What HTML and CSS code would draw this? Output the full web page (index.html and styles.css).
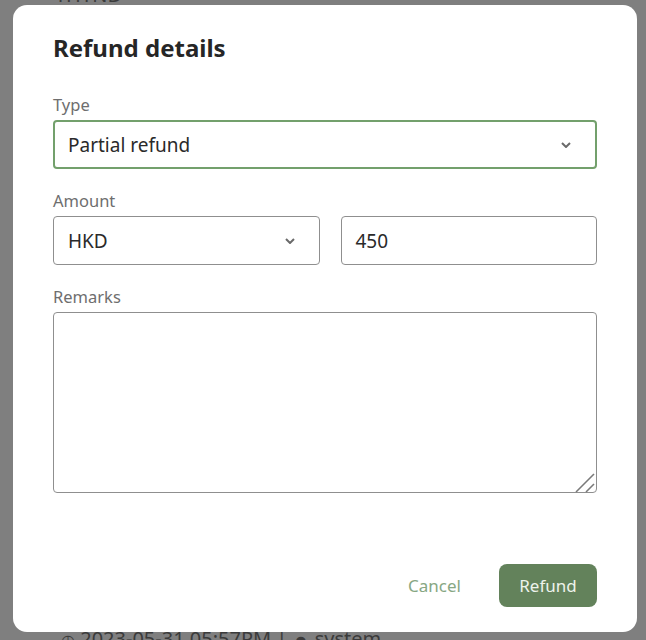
FILE: index.html
```html
<!DOCTYPE html>
<html>
<head>
    <title>Refund details</title>
    <link rel="stylesheet" href="styles.css">
</head>
<body>
    <div class="page">
        <div class="page-top">THYND</div>
        <div class="page-log">
            <span class="log-icon">&#9719;</span> 2023-05-31 05:57PM | <span class="log-icon">&#9787;</span> system
        </div>
    </div>

    <div class="dialog">
        <h2>Refund details</h2>

        <div class="field">
            <label>Type</label>
            <div class="box select active">
                <span>Partial refund</span>
                <svg class="chevron" width="10" height="6" viewBox="0 0 10 6"><polyline points="1,1 5,5 9,1" fill="none" stroke="#6a6a6a" stroke-width="2"/></svg>
            </div>
        </div>

        <div class="field">
            <label>Amount</label>
            <div class="row">
                <div class="box select">
                    <span>HKD</span>
                    <svg class="chevron" width="10" height="6" viewBox="0 0 10 6"><polyline points="1,1 5,5 9,1" fill="none" stroke="#6a6a6a" stroke-width="2"/></svg>
                </div>
                <div class="box">
                    <span>450</span>
                </div>
            </div>
        </div>

        <div class="field">
            <label>Remarks</label>
            <div class="remarks-wrap">
                <textarea class="remarks"></textarea>
                <svg class="grip" width="22" height="22" viewBox="0 0 22 22"><line x1="3" y1="21" x2="21" y2="3" stroke="#7a7a7a" stroke-width="1.6"/><line x1="13" y1="21" x2="21" y2="13" stroke="#7a7a7a" stroke-width="1.6"/></svg>
            </div>
        </div>

        <div class="actions">
            <button class="btn-cancel">Cancel</button>
            <button class="btn-refund">Refund</button>
        </div>
    </div>
</body>
</html>
```

FILE: styles.css
```css
body { margin: 0; background: #7f7f7f; font-family: "Noto Sans", "Open Sans", sans-serif; overflow: hidden; }
.page { height: 640px; display: flex; flex-direction: column; justify-content: space-between; padding-left: 55px; color: #3b3b3b; font-size: 20px; overflow: hidden; }
.page-top { margin-top: -17px; line-height: 24px; }
.page-log { margin-bottom: -12px; padding-left: 6px; line-height: 24px; }
.log-icon { font-size: 16px; }

.dialog { position: absolute; left: 13px; top: 5px; width: 624px; height: 627px; box-sizing: border-box; background: #fff; border-radius: 14px; padding: 28px 40px 25px; display: flex; flex-direction: column; }
.dialog h2 { margin: 0 0 32px; font-size: 24px; line-height: 30px; font-weight: 700; color: #262626; }

.field { display: flex; flex-direction: column; margin-bottom: 22px; }
.field label { font-size: 16.5px; line-height: 20px; color: #6e6e6e; margin-bottom: 5px; }
.row { display: flex; gap: 21px; }
.row .box { flex: 1 1 0; }

.box { height: 49px; box-sizing: border-box; border: 1.5px solid #8f8f8f; border-radius: 4px; padding: 0 14px; display: flex; align-items: center; justify-content: space-between; font-size: 19px; color: #2a2a2a; }
.box.select { padding-right: 24px; }
.box.active { border: 2px solid #73a06c; padding-left: 13px; }
.chevron { display: block; }

.remarks-wrap { position: relative; }
.remarks { display: block; width: 100%; height: 181px; box-sizing: border-box; border: 1.5px solid #8f8f8f; border-radius: 4px; resize: none; font-family: inherit; font-size: 16px; padding: 10px 14px; margin: 0; }
.grip { position: absolute; right: 2px; bottom: 0; }

.actions { margin-top: auto; display: flex; justify-content: flex-end; align-items: center; gap: 20px; }
.actions button { font-family: inherit; font-size: 17px; border: none; cursor: pointer; height: 43px; }
.btn-cancel { background: none; color: #87a783; padding: 0 18px; }
.btn-refund { background: #63825b; color: #eef3ec; border-radius: 8px; width: 98px; }
```
